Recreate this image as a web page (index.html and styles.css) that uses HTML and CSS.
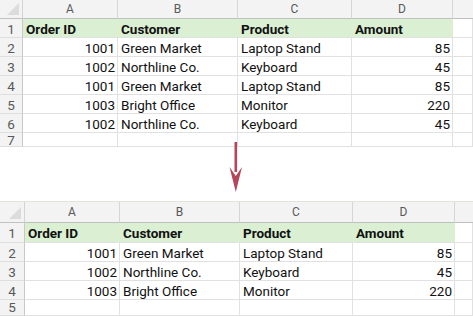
FILE: index.html
```html
<!DOCTYPE html>
<html>
<head>
<meta charset="utf-8">
<link rel="stylesheet" href="styles.css">
</head>
<body>
<div class="page">
  <div class="sheet sheet-top">
    <div class="corner"></div><div class="ch">A</div><div class="ch">B</div><div class="ch">C</div><div class="ch">D</div><div class="ch ch-last"></div>
    <div class="rh">1</div><div class="c hd">Order ID</div><div class="c hd">Customer</div><div class="c hd">Product</div><div class="c hd">Amount</div><div class="c"></div>
    <div class="rh">2</div><div class="c num">1001</div><div class="c">Green Market</div><div class="c">Laptop Stand</div><div class="c num">85</div><div class="c"></div>
    <div class="rh">3</div><div class="c num">1002</div><div class="c">Northline Co.</div><div class="c">Keyboard</div><div class="c num">45</div><div class="c"></div>
    <div class="rh">4</div><div class="c num">1001</div><div class="c">Green Market</div><div class="c">Laptop Stand</div><div class="c num">85</div><div class="c"></div>
    <div class="rh">5</div><div class="c num">1003</div><div class="c">Bright Office</div><div class="c">Monitor</div><div class="c num">220</div><div class="c"></div>
    <div class="rh">6</div><div class="c num">1002</div><div class="c">Northline Co.</div><div class="c">Keyboard</div><div class="c num">45</div><div class="c"></div>
    <div class="rh rh-cut">7</div><div class="c"></div><div class="c"></div><div class="c"></div><div class="c"></div><div class="c"></div>
  </div>
  <div class="between"></div>
  <div class="sheet sheet-bottom">
    <div class="corner"></div><div class="ch">A</div><div class="ch">B</div><div class="ch">C</div><div class="ch">D</div><div class="ch ch-last"></div>
    <div class="rh">1</div><div class="c hd">Order ID</div><div class="c hd">Customer</div><div class="c hd">Product</div><div class="c hd">Amount</div><div class="c"></div>
    <div class="rh">2</div><div class="c num">1001</div><div class="c">Green Market</div><div class="c">Laptop Stand</div><div class="c num">85</div><div class="c"></div>
    <div class="rh">3</div><div class="c num">1002</div><div class="c">Northline Co.</div><div class="c">Keyboard</div><div class="c num">45</div><div class="c"></div>
    <div class="rh">4</div><div class="c num">1003</div><div class="c">Bright Office</div><div class="c">Monitor</div><div class="c num">220</div><div class="c"></div>
    <div class="rh rh-cut">5</div><div class="c"></div><div class="c"></div><div class="c"></div><div class="c"></div><div class="c"></div>
  </div>
  <svg class="arrow" width="14" height="52" viewBox="0 0 14 52" xmlns="http://www.w3.org/2000/svg">
    <rect x="5.5" y="0" width="2.6" height="30" fill="#b5465a"/>
    <polygon points="0.5,25 6.8,34 13,25 6.8,50" fill="#b5465a"/>
  </svg>
</div>
</body>
</html>
```

FILE: styles.css
```css
* { box-sizing: border-box; }
html, body { margin: 0; padding: 0; background: #ffffff; }
.page {
  position: relative;
  width: 473px;
  height: 316px;
  overflow: hidden;
  font-family: Roboto, "Noto Sans", sans-serif;
  color: #111111;
}
.sheet { display: grid; }
.sheet-top {
  grid-template-columns: 23px 95px 120px 114px 101px 20px;
  grid-template-rows: 19px repeat(6, 19px) 14px;
}
.sheet-bottom {
  border-top: 1px solid #e5e1dc;
  grid-template-columns: 25px 95px 120px 113px 102px 18px;
  grid-template-rows: 21px 20px 19px 19px 19px 16px;
}
.between { height: 54px; }
.corner {
  background: #f3f3f3;
  border-right: 1px solid #d4d4d4;
  border-bottom: 1px solid #c2c2c2;
  position: relative;
}
.corner::after {
  content: "";
  position: absolute;
  right: 3px;
  bottom: 3px;
  width: 0;
  height: 0;
  border-left: 12px solid transparent;
  border-bottom: 12px solid #dcdcdc;
}
.ch {
  background: #f3f3f3;
  border-right: 1px solid #d6d6d6;
  border-bottom: 1px solid #bfbfbf;
  color: #595959;
  font-size: 12px;
  text-align: center;
  line-height: 19px;
}
.sheet-bottom .ch { line-height: 21px; }
.ch-last { border-right: none; }
.rh {
  background: #f3f3f3;
  border-right: 1px solid #c8c8c8;
  border-bottom: 1px solid #dedede;
  color: #595959;
  font-size: 13.5px;
  text-align: center;
  line-height: 18px;
  padding-top: 1px;
}
.rh-cut { line-height: 15px; padding-top: 0; }
.c {
  border-right: 1px solid #e1e1e1;
  border-bottom: 1px solid #e1e1e1;
  font-size: 13.5px;
  line-height: 18px;
  padding: 1px 3px 0 3px;
  white-space: nowrap;
  overflow: hidden;
}
.num { text-align: right; padding-right: 2px; }
.hd {
  background: #dbf0d3;
  font-weight: 700;
  border-right-color: #dbf0d3;
}
.arrow {
  position: absolute;
  left: 229px;
  top: 142px;
}
```
